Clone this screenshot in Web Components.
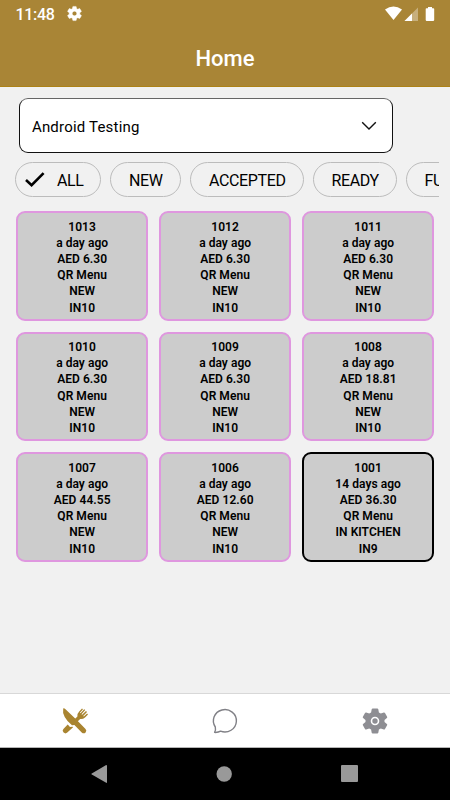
<!DOCTYPE html>
<html lang="en">
<head>
<meta charset="utf-8">
<title>Home</title>
<style>
  html, body {
    margin: 0;
    height: 100%;
    overflow: hidden;
  }

  body {
    font-family: Roboto, "Liberation Sans", sans-serif;
    background: #f1f1f1;
    color: #000;
    --brand: #a98536;
  }
</style>
</head>
<body>
<orders-app></orders-app>

<script>
function attach(el, html) {
  let template = document.createElement('template');
  template.innerHTML = html;
  el.attachShadow({mode: 'open'}).appendChild(template.content.cloneNode(true));
}

const GEAR = 'M19.43 12.98c.04-.32.07-.64.07-.98s-.03-.66-.07-.98l2.11-1.65c.19-.15.24-.42.12-.64l-2-3.46c-.12-.22-.39-.3-.61-.22l-2.49 1c-.52-.4-1.08-.73-1.69-.98l-.38-2.65C14.46 2.18 14.25 2 14 2h-4c-.25 0-.46.18-.49.42l-.38 2.65c-.61.25-1.17.59-1.69.98l-2.49-1c-.23-.09-.49 0-.61.22l-2 3.46c-.13.22-.07.49.12.64l2.11 1.65c-.04.32-.07.65-.07.98s.03.66.07.98l-2.11 1.65c-.19.15-.24.42-.12.64l2 3.46c.12.22.39.3.61.22l2.49-1c.52.4 1.08.73 1.69.98l.38 2.65c.03.24.24.42.49.42h4c.25 0 .46-.18.49-.42l.38-2.65c.61-.25 1.17-.59 1.69-.98l2.49 1c.23.09.49 0 .61-.22l2-3.46c.12-.22.07-.49-.12-.64l-2.11-1.65zM12 15.2c-1.77 0-3.2-1.43-3.2-3.2s1.43-3.2 3.2-3.2 3.2 1.43 3.2 3.2-1.43 3.2-3.2 3.2z';

class StatusBar extends HTMLElement {
  constructor() {
    super();
    attach(this, /* html */ `
      <style>
        :host {
          display: flex;
          align-items: center;
          height: 27px;
          padding: 0 15px 0 15.5px;
          color: #fff;
          font-size: 16px;
          font-weight: 500;
          letter-spacing: -.3px;
        }
        span { line-height: 26px; padding-top: 2px; }
        svg { display: block; fill: currentColor; }
        .gear { margin-left: 11.5px; }
        .signals { margin-left: auto; }
      </style>
      <span><slot></slot></span>
      <svg class="gear" width="17" height="17" viewBox="0 0 24 24"><path d="${GEAR}" stroke="#fff" stroke-width=".6"/></svg>
      <svg class="signals" width="50" height="16" viewBox="385 5 50 16">
        <path d="M385 8.4Q393.5 2.8 402 8.4L393.5 19z"/>
        <path d="M418 6.5V20h-13.5z" opacity=".35"/>
        <path d="M412 12.5V20h-7.5z"/>
        <path d="M428 6h4v1.3h1.4q.8 0 .8.8v11q0 .8-.8.8h-6.9q-.8 0-.8-.8v-11q0-.8.8-.8h1.5z"/>
      </svg>
    `);
  }
}

class AppHeader extends HTMLElement {
  constructor() {
    super();
    attach(this, /* html */ `
      <style>
        :host {
          display: block;
          box-sizing: border-box;
          height: 87px;
          background: var(--brand);
          border-bottom: 1px solid #ad8217;
        }
        h1 {
          margin: 0;
          padding-top: 2px;
          color: #fff;
          text-align: center;
          font-size: 22px;
          font-weight: 500;
          line-height: 59px;
        }
      </style>
      <status-bar>11:48</status-bar>
      <h1><slot></slot></h1>
    `);
  }
}

class SelectBox extends HTMLElement {
  constructor() {
    super();
    attach(this, /* html */ `
      <style>
        :host {
          display: flex;
          align-items: center;
          justify-content: space-between;
          box-sizing: border-box;
          width: 373.5px;
          height: 55px;
          margin: 11px 0 9px 19.4px;
          padding: 0 14.5px 0 11.5px;
          background: #fff;
          border: 1px solid #111;
          border-top-color: #666;
          border-radius: 9px;
          font-size: 15px;
          letter-spacing: .2px;
        }
        span { padding-top: 2px; }
        svg { display: block; }
      </style>
      <span><slot></slot></span>
      <svg width="16" height="10" viewBox="0 0 16 10" fill="none" stroke="#111" stroke-width="1.4">
        <path d="M1.2 1.3 8 8.1l6.8-6.8"/>
      </svg>
    `);
  }
}

class FilterChip extends HTMLElement {
  constructor() {
    super();
    let check = this.hasAttribute('selected')
      ? '<svg width="20" height="15" viewBox="0 0 20 15" fill="none" stroke="#000" stroke-width="2.6"><path d="M1 8 6.6 13.2 18.6 1.2"/></svg>'
      : '';
    attach(this, /* html */ `
      <style>
        :host {
          display: flex;
          flex: none;
          align-items: center;
          box-sizing: border-box;
          height: 35px;
          padding-left: 17.5px;
          border: 1px solid #bcbcbc;
          border-radius: 18px;
          font-size: 16px;
          letter-spacing: -.35px;
        }
        :host([selected]) { padding-left: 8.5px; }
        span { padding-top: 2px; }
        svg { margin-right: 12px; }
      </style>
      ${check}<span><slot></slot></span>
    `);
  }
}

class FilterBar extends HTMLElement {
  constructor() {
    super();
    attach(this, /* html */ `
      <style>
        :host {
          display: flex;
          gap: 9px;
          margin-right: 11px;
          padding-left: 15.4px;
          overflow: hidden;
        }
      </style>
      <slot></slot>
    `);
  }
}

class OrderCard extends HTMLElement {
  connectedCallback() {
    if(this.shadowRoot) return;
    let lines = ['number', 'age', 'total', 'source', 'status', 'table']
      .map(name => `<div>${this.getAttribute(name)}</div>`).join('');
    attach(this, /* html */ `
      <style>
        :host {
          display: block;
          box-sizing: border-box;
          height: 109.5px;
          padding: 5.5px 0 0 .4px;
          background: #ccc;
          border: 2px solid #df97df;
          border-radius: 9px;
          text-align: center;
          font-size: 12px;
          font-weight: 600;
          line-height: 16.2px;
          letter-spacing: .05px;
        }
        :host([status="IN KITCHEN"]) { border-color: #000; }
      </style>
      ${lines}
    `);
  }
}

class OrderGrid extends HTMLElement {
  constructor() {
    super();
    attach(this, /* html */ `
      <style>
        :host {
          display: grid;
          grid-template-columns: repeat(3, 132.5px);
          gap: 11px 10.5px;
          padding: 14px 0 0 15.7px;
        }
      </style>
      <slot></slot>
    `);
  }
}

class TabBar extends HTMLElement {
  constructor() {
    super();
    attach(this, /* html */ `
      <style>
        :host {
          display: grid;
          grid-template-columns: repeat(3, 1fr);
          place-items: center;
          box-sizing: border-box;
          height: 55px;
          background: #fff;
          border-top: 1px solid #d8d8d8;
          border-bottom: 1px solid #b5b5b5;
        }
        svg { display: block; }
      </style>
      <svg width="28" height="28" viewBox="0 0 28 28" fill="#a98430">
        <path d="M2.2 1.4Q3.2 1 4.5 2.3L15 12.2 24.3 21.7Q26.2 23.6 24.6 25.4 22.8 27.2 20.7 25.4L13.4 17.9 11 18.3Q.6 9.4 2.2 1.4z"/>
        <path d="M12.8 13.1 16.4 9.6Q16 6.4 18.2 4.4L21 1.4 22 2.3 18.9 5.7 19.5 6.3 23.2 2.2 24.2 3.1 20.5 7.2 21.1 7.8 25 3.9 26 4.9 22.2 8.9 22.8 9.5 26.1 6.5 27 7.4 24 10.4Q21.8 12.3 19.2 11.9L15.5 15.4zM6.7 17.6 9 20 11.5 19.7 12.1 20.3 6.3 25.6Q4.500 27.200 2.600 25.600 .8 23.800 2.400 22z"/>
      </svg>
      <svg width="28" height="28" viewBox="0 0 28 28" fill="none" stroke="#808086" stroke-width="1.4" stroke-linejoin="round">
        <path d="M3.6 25.4Q5 23 4.300 20A11.500 11.200 0 1 1 9.600 24.200Q7.200 25.600 3.600 25.400z"/>
      </svg>
      <svg width="28" height="28" viewBox="0 0 28 28" fill="#8e8e93">
        <path fill-rule="evenodd" d="M11.7 1.5h4.6q.8 0 1 .8l.6 3.1 1.9 1.1 3-1q.8-.2 1.2.5l2.1 3.7q.4.7-.2 1.2l-2.4 2.1v2l2.4 2.1q.6.5.2 1.2L24 22q-.4.7-1.2.5l-3-1-1.9 1.1-.6 3.1q-.2.8-1 .8h-4.6q-.8 0-1-.8l-.6-3.1-1.9-1.1-3 1Q4.4 22.7 4 22l-2.1-3.7q-.4-.7.2-1.2L4.5 15v-2l-2.4-2.1q-.6-.5-.2-1.2L4 6q.4-.7 1.2-.5l3 1 1.9-1.1.6-3.1q.2-.8 1-.8zM14 9.7a4.3 4.3 0 1 0 0 8.6 4.3 4.3 0 0 0 0-8.6z"/>
        <circle cx="14" cy="14" r="2.7"/>
      </svg>
    `);
  }
}

class SystemNav extends HTMLElement {
  constructor() {
    super();
    attach(this, /* html */ `
      <style>
        :host {
          display: flex;
          align-items: center;
          justify-content: space-between;
          box-sizing: border-box;
          height: 52px;
          padding: 0 92.5px 1px 91px;
          background: #000;
        }
        svg { fill: #999; }
      </style>
      <svg width="16" height="18" viewBox="0 0 16 18"><path d="M15.2 0q.8 0 .8.8v16.4q0 1-.8.6L.8 9.6q-1-.6 0-1.2z"/></svg>
      <svg width="17" height="16" viewBox="0 0 17 16"><circle cx="9.2" cy="8" r="7.7"/></svg>
      <svg width="17" height="17" viewBox="0 0 17 17"><rect width="17" height="17" rx="1"/></svg>
    `);
  }
}

class OrdersApp extends HTMLElement {
  constructor() {
    super();
    attach(this, /* html */ `
      <style>
        :host {
          display: flex;
          flex-direction: column;
          width: 450px;
          height: 800px;
        }
        main { flex: 1; min-height: 0; }
      </style>
      <app-header>Home</app-header>
      <main>
        <select-box>Android Testing</select-box>
        <filter-bar>
          <filter-chip selected style="width: 86px">ALL</filter-chip>
          <filter-chip style="width: 71px">NEW</filter-chip>
          <filter-chip style="width: 113.5px">ACCEPTED</filter-chip>
          <filter-chip style="width: 84px">READY</filter-chip>
          <filter-chip style="width: 112px">FULFILLED</filter-chip>
        </filter-bar>
        <order-grid>
          <order-card number="1013" age="a day ago" total="AED 6.30" source="QR Menu" status="NEW" table="IN10"></order-card>
          <order-card number="1012" age="a day ago" total="AED 6.30" source="QR Menu" status="NEW" table="IN10"></order-card>
          <order-card number="1011" age="a day ago" total="AED 6.30" source="QR Menu" status="NEW" table="IN10"></order-card>
          <order-card number="1010" age="a day ago" total="AED 6.30" source="QR Menu" status="NEW" table="IN10"></order-card>
          <order-card number="1009" age="a day ago" total="AED 6.30" source="QR Menu" status="NEW" table="IN10"></order-card>
          <order-card number="1008" age="a day ago" total="AED 18.81" source="QR Menu" status="NEW" table="IN10"></order-card>
          <order-card number="1007" age="a day ago" total="AED 44.55" source="QR Menu" status="NEW" table="IN10"></order-card>
          <order-card number="1006" age="a day ago" total="AED 12.60" source="QR Menu" status="NEW" table="IN10"></order-card>
          <order-card number="1001" age="14 days ago" total="AED 36.30" source="QR Menu" status="IN KITCHEN" table="IN9"></order-card>
        </order-grid>
      </main>
      <tab-bar></tab-bar>
      <system-nav></system-nav>
    `);
  }
}

customElements.define('status-bar', StatusBar);
customElements.define('app-header', AppHeader);
customElements.define('select-box', SelectBox);
customElements.define('filter-chip', FilterChip);
customElements.define('filter-bar', FilterBar);
customElements.define('order-card', OrderCard);
customElements.define('order-grid', OrderGrid);
customElements.define('tab-bar', TabBar);
customElements.define('system-nav', SystemNav);
customElements.define('orders-app', OrdersApp);
</script>
</body>
</html>
